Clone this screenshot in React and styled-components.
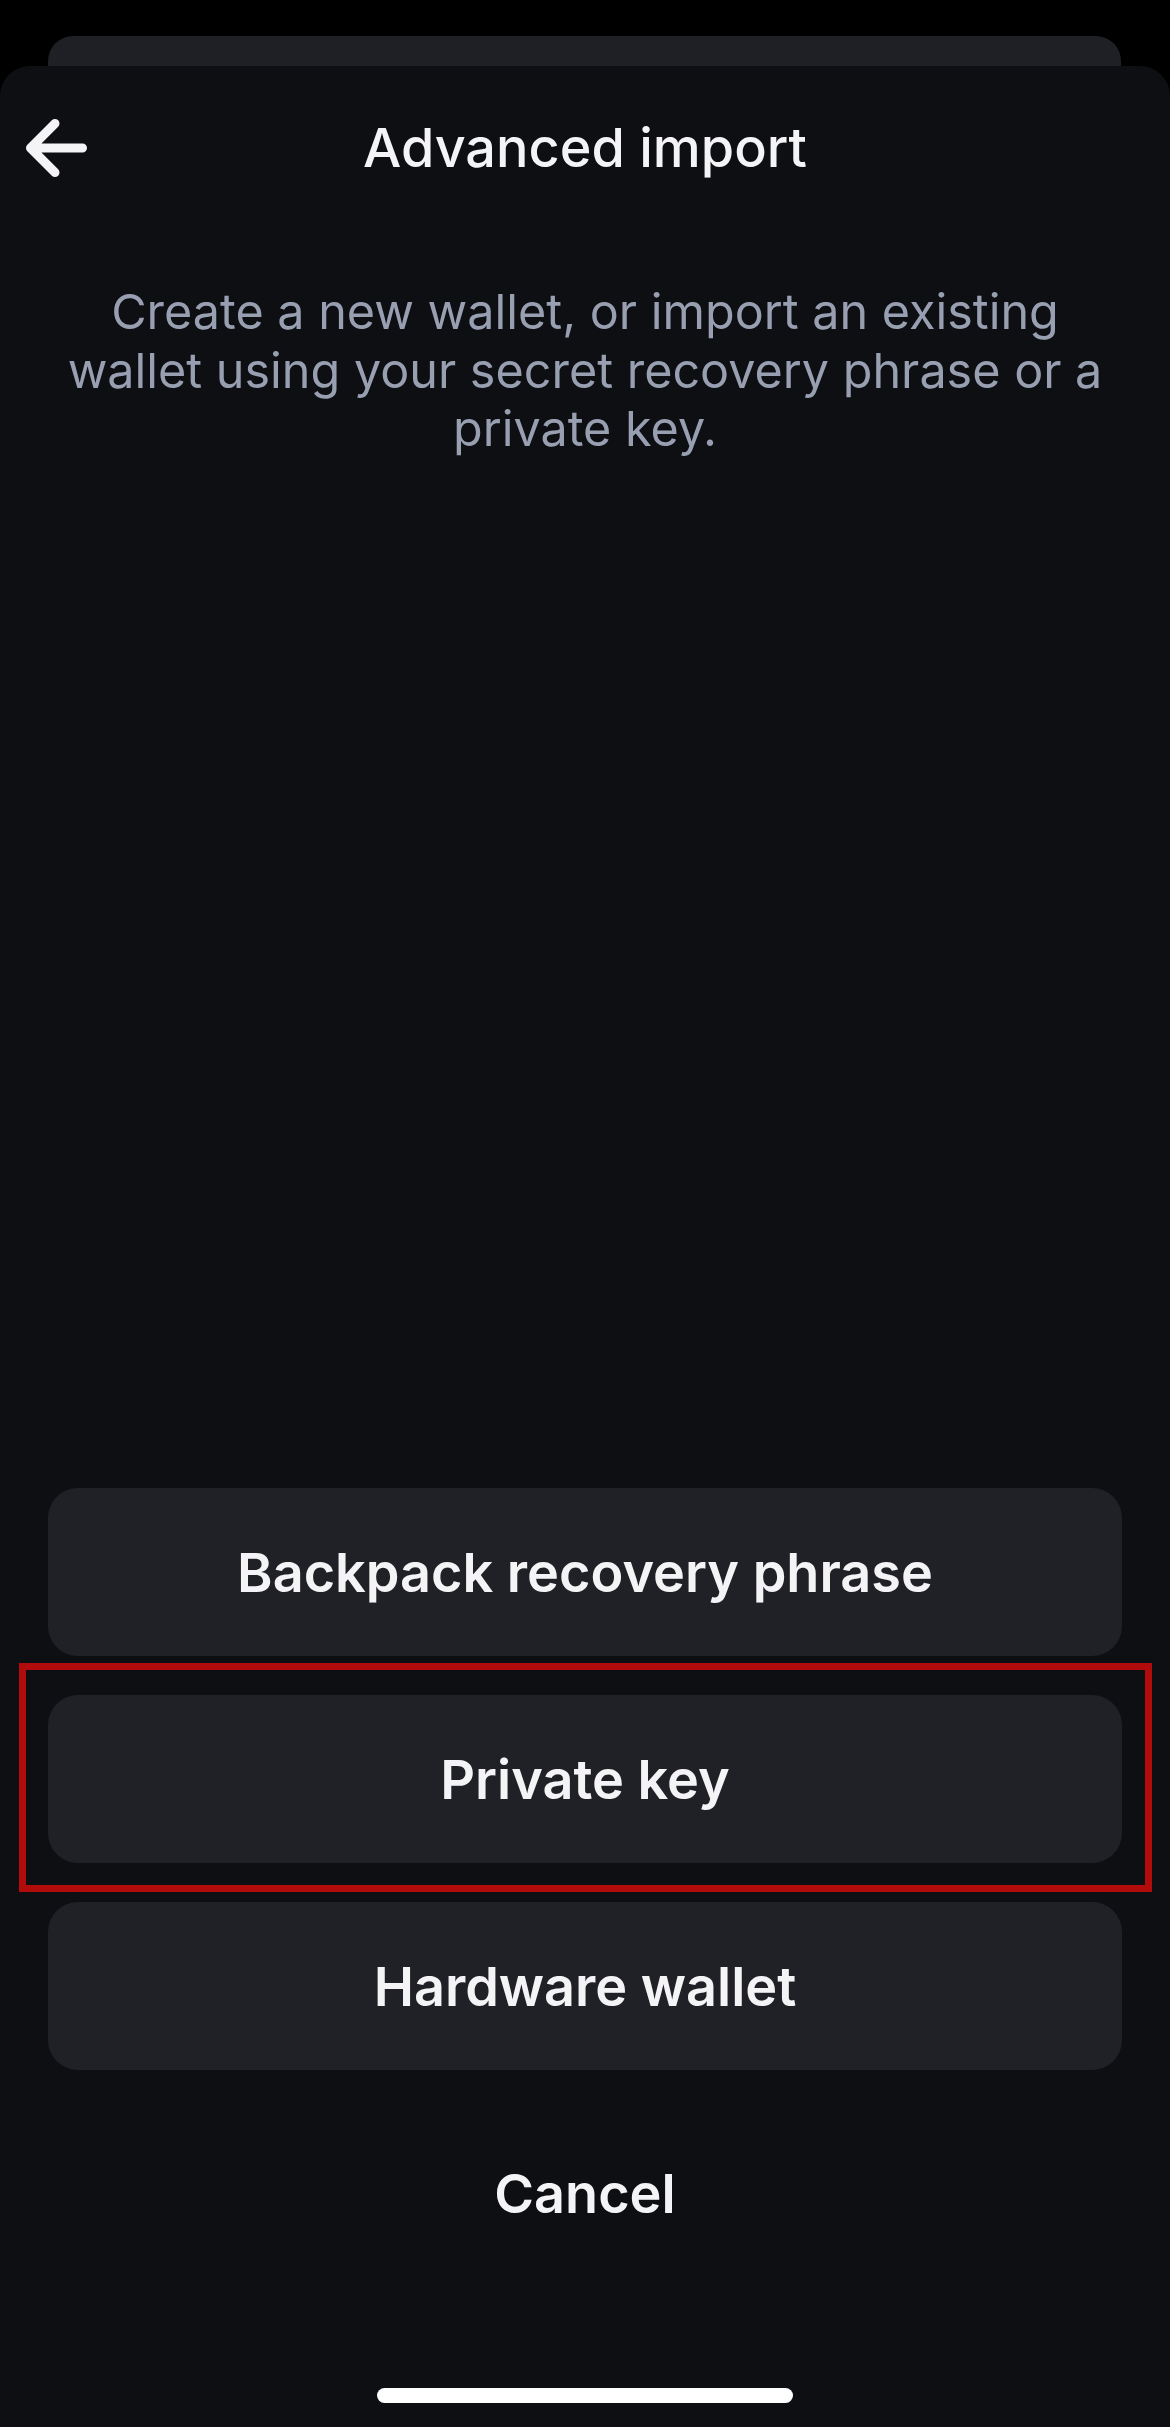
import styled, { createGlobalStyle } from "styled-components";

const GlobalStyle = createGlobalStyle`
  html, body {
    margin: 0;
    padding: 0;
    background-color: #000;
  }

  body {
    font-family: Inter, "Noto Sans", "Liberation Sans", sans-serif;
    -webkit-font-smoothing: antialiased;
  }

  * {
    box-sizing: border-box;
  }
`;

const Screen = styled.div`
  display: flex;
  flex-direction: column;
  min-height: 2427px;
  background-color: #000;
`;

const BehindSheet = styled.div`
  height: 30px;
  margin: 36px 49px 0 48px;
  background-color: #1f2025;
  border-radius: 25px 25px 0 0;
`;

const Sheet = styled.div`
  flex: 1;
  display: flex;
  flex-direction: column;
  background-color: #0e0f13;
  border-radius: 30px 30px 0 0;
`;

const Header = styled.div`
  display: grid;
  grid-template-columns: 1fr auto 1fr;
  align-items: center;
  height: 164px;
  padding: 0 22px;
`;

const BackButton = styled.button`
  justify-self: start;
  display: flex;
  align-items: center;
  width: 70px;
  height: 70px;
  padding: 0;
  border: none;
  background: none;
  color: #f4f4f6;
  cursor: pointer;
`;

const Title = styled.h1`
  margin: 0;
  font-size: 54px;
  font-weight: 500;
  line-height: 66px;
  color: #f4f4f6;
  text-align: center;
`;

const Description = styled.p`
  margin: 53px 0 0;
  padding: 0 54px;
  font-size: 48.5px;
  line-height: 58.5px;
  color: #979fb1;
  text-align: center;
`;

const Spacer = styled.div`
  flex: 1;
`;

const Options = styled.div`
  display: flex;
  flex-direction: column;
  gap: 39px;
  padding: 0 48px;
`;

const OptionButton = styled.button`
  position: relative;
  display: flex;
  align-items: center;
  justify-content: center;
  height: 168px;
  border: none;
  border-radius: 30px;
  background-color: ${(props) => (props.plain ? "transparent" : "#202127")};
  color: #f4f4f6;
  font-family: inherit;
  font-size: 54px;
  font-weight: 600;
  cursor: pointer;

  &::after {
    content: "";
    display: ${(props) => (props.highlighted ? "block" : "none")};
    position: absolute;
    top: -32px;
    left: -29px;
    right: -30px;
    bottom: -29px;
    border: 7px solid #b10b0b;
    pointer-events: none;
  }
`;

const HomeBar = styled.div`
  display: flex;
  justify-content: center;
  padding: 111px 0 24px;

  div {
    width: 416px;
    height: 15px;
    border-radius: 8px;
    background-color: #fff;
  }
`;

function BackArrow() {
  return (
    <svg width="70" height="70" viewBox="0 0 70 70" fill="none">
      <path
        d="M8.5 35H60.5M33 10.5L8.5 35L33 59.5"
        stroke="currentColor"
        strokeWidth="9"
        strokeLinecap="round"
        strokeLinejoin="round"
      />
    </svg>
  );
}

const options = [
  { label: "Backpack recovery phrase" },
  { label: "Private key", highlighted: true },
  { label: "Hardware wallet" },
];

function App() {
  return (
    <Screen>
      <GlobalStyle />
      <BehindSheet />
      <Sheet>
        <Header>
          <BackButton aria-label="Back">
            <BackArrow />
          </BackButton>
          <Title>Advanced import</Title>
          <div />
        </Header>
        <Description>
          Create a new wallet, or import an existing wallet using your secret
          recovery phrase or a private key.
        </Description>
        <Spacer />
        <Options>
          {options.map((option) => (
            <OptionButton key={option.label} highlighted={option.highlighted}>
              {option.label}
            </OptionButton>
          ))}
          <OptionButton plain>Cancel</OptionButton>
        </Options>
        <HomeBar>
          <div />
        </HomeBar>
      </Sheet>
    </Screen>
  );
}

export default App;
